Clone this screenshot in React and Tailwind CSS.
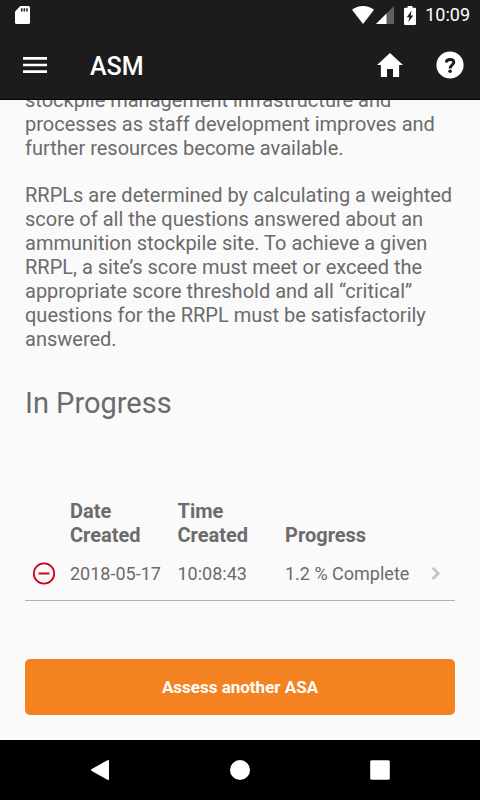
import { IoMdMenu, IoMdHome } from "react-icons/io";

const assessments = [
  { id: 1, date: "2018-05-17", time: "10:08:43", progress: "1.2 % Complete" },
];

function StatusBar() {
  return (
    <div className="flex h-[30px] items-center justify-between pl-[15px] pr-[10px] text-white">
      {/* SD card */}
      <svg width="15" height="18" viewBox="0 0 15 18" aria-hidden="true">
        <path d="M5.4 0H13.4Q15 0 15 1.6V16.4Q15 18 13.4 18H1.6Q0 18 0 16.4V5.4Z" fill="#fff" />
        <path d="M6 2.2h1.5v3.4H6zM8.6 2.2h1.5v3.4H8.6zM11.2 2.2h1.5v3.4h-1.5z" fill="#1c1c1c" />
      </svg>

      <div className="flex items-center">
        {/* Wifi */}
        <svg width="22" height="18" viewBox="0 0 22 18" aria-hidden="true">
          <path d="M11 18L0 3.8C3 1.4 6.8 0 11 0s8 1.4 11 3.8Z" fill="#fff" />
        </svg>
        {/* Signal */}
        <svg className="ml-[2px]" width="18" height="18" viewBox="0 0 18 18" aria-hidden="true">
          <path d="M0 18L18 0V18Z" fill="#606060" />
          <path d="M0 18L10.5 7.5V18Z" fill="#fff" />
        </svg>
        {/* Battery */}
        <svg className="ml-[10px]" width="12" height="19" viewBox="0 0 12 19" aria-hidden="true">
          <path d="M3.6 0h4.8v1.8H11Q12 1.8 12 2.8V18Q12 19 11 19H1Q0 19 0 18V2.8Q0 1.8 1 1.8H3.6Z" fill="#fff" />
          <path d="M7.6 4.6L2.8 11.3H5.4L4.4 16.2L9.3 9.6H6.7Z" fill="#1c1c1c" />
        </svg>
        <span className="ml-[9px] text-[18px] leading-5">10:09</span>
      </div>
    </div>
  );
}

function HelpIcon() {
  return (
    <svg width="32" height="32" viewBox="0 0 32 32" fill="none">
      <circle cx="16" cy="16" r="13.6" fill="#fff" />
      <path
        d="M12.3 13.6C12.3 11.5 13.8 10.5 16.1 10.5C18.4 10.5 19.8 11.6 19.8 13.3C19.8 15.8 16.1 15.9 16.1 19.4"
        stroke="#1c1c1c"
        strokeWidth="2.9"
      />
      <circle cx="16.1" cy="22.2" r="1.8" fill="#1c1c1c" />
    </svg>
  );
}

function Header() {
  return (
    <header className="shrink-0 border-b border-black bg-[#1c1c1c]">
      <StatusBar />
      <div className="flex h-[69px] items-center pl-[19px] pr-[14px] text-white">
        <button type="button" aria-label="Menu">
          <IoMdMenu size={32} />
        </button>
        <h1 className="ml-[39px] flex-1 pt-1 text-[25px] font-medium leading-8">ASM</h1>
        <button type="button" aria-label="Home">
          <IoMdHome size={32} />
        </button>
        <button type="button" aria-label="Help" className="ml-7">
          <HelpIcon />
        </button>
      </div>
    </header>
  );
}

function AssessmentTable() {
  return (
    <table className="mt-[76px] w-full table-fixed text-left">
      <thead>
        <tr className="align-bottom text-[20px] leading-6">
          <td className="w-[45px]" />
          <th className="w-1/4 pr-4 font-bold">Date Created</th>
          <th className="w-1/4 pr-4 font-bold">Time Created</th>
          <th className="font-bold">Progress</th>
          <td className="w-[37px]" />
        </tr>
      </thead>
      <tbody>
        {assessments.map((item) => (
          <tr key={item.id} className="h-[54px] border-b border-[#b2b2b2] text-[18px]">
            <td>
              <button type="button" aria-label="Remove" className="ml-[7px] block">
                <svg width="24" height="24" viewBox="0 0 24 24" fill="none" stroke="#d0021b">
                  <circle cx="12" cy="12.5" r="10.2" strokeWidth="1.8" />
                  <path d="M6.6 12.5H17.4" strokeWidth="2" />
                </svg>
              </button>
            </td>
            <td>{item.date}</td>
            <td>{item.time}</td>
            <td className="whitespace-nowrap">{item.progress}</td>
            <td>
              <button type="button" aria-label="Open" className="ml-[13px] block">
                <svg width="10" height="14" viewBox="0 0 10 14" fill="none" stroke="#c4c4c4" strokeWidth="2.8">
                  <path d="M1.6 1.8L7.2 7.4L1.6 13" />
                </svg>
              </button>
            </td>
          </tr>
        ))}
      </tbody>
    </table>
  );
}

function NavigationBar() {
  return (
    <nav className="flex h-[60px] shrink-0 items-center justify-center gap-[116px] bg-black">
      <button type="button" aria-label="Back">
        <svg width="24" height="24" viewBox="0 0 24 24" fill="#fff">
          <path d="M19.4 2.2Q21 1.4 21 3V21Q21 22.6 19.4 21.8L3.8 13Q2.2 12 3.8 11Z" />
        </svg>
      </button>
      <button type="button" aria-label="Home screen">
        <svg width="24" height="24" viewBox="0 0 24 24" fill="#fff">
          <circle cx="12" cy="12" r="10" />
        </svg>
      </button>
      <button type="button" aria-label="Recent apps">
        <svg width="24" height="24" viewBox="0 0 24 24" fill="#fff">
          <rect x="2.2" y="2.2" width="19.6" height="19.6" rx="1.6" />
        </svg>
      </button>
    </nav>
  );
}

export default function App() {
  return (
    <div className="flex h-screen flex-col bg-[#fafafa] font-['Roboto',sans-serif] text-[#6b6b6b]">
      <Header />

      {/* Content is scrolled to its end */}
      <main className="flex min-h-0 flex-1 flex-col justify-end overflow-hidden px-[25px] pb-[25px]">
        <div className="space-y-[23px] text-[20px] leading-6">
          <p>
            stockpile management infrastructure and processes as staff development improves and
            further resources become available.
          </p>
          <p>
            RRPLs are determined by calculating a weighted score of all the questions answered about
            an ammunition stockpile site. To achieve a given RRPL, a site’s score must meet or exceed
            the appropriate score threshold and all “critical” questions for the RRPL must be
            satisfactorily answered.
          </p>
        </div>

        <h2 className="mt-8 text-[29px] leading-10">In Progress</h2>

        <AssessmentTable />

        <button
          type="button"
          className="mt-[58px] h-14 w-full shrink-0 rounded-[5px] bg-[#f58220] pt-[2px] text-[17px] font-bold text-white"
        >
          Assess another ASA
        </button>
      </main>

      <NavigationBar />
    </div>
  );
}
